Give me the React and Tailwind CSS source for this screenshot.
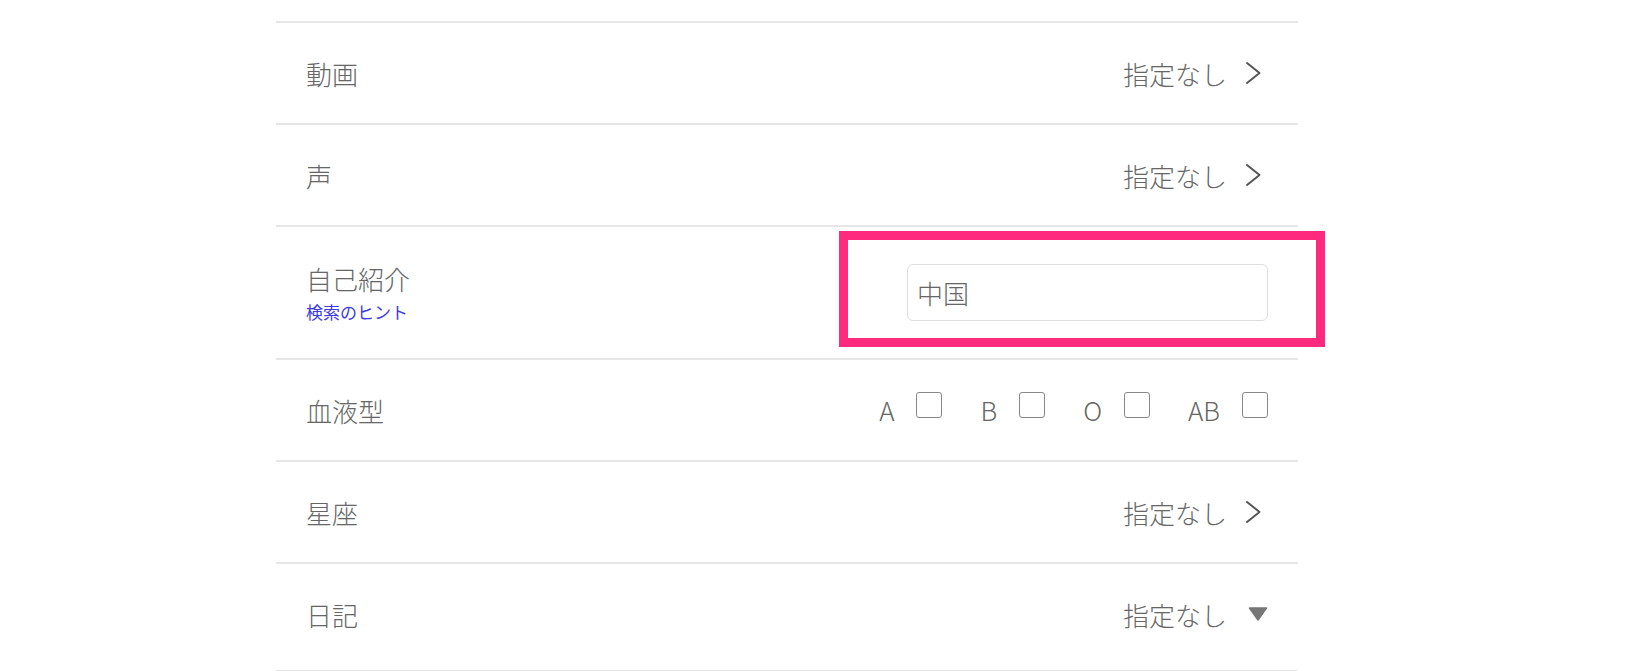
const font = { fontFamily: '"Noto Sans CJK JP", "Noto Sans", sans-serif' };

function Chevron() {
  return (
    <svg width="17" height="24" viewBox="0 0 17 24" className="shrink-0 mr-[6px]">
      <path d="M2 2 L14.5 12 L2 22" fill="none" stroke="#555" strokeWidth="2" strokeLinecap="round" strokeLinejoin="round" />
    </svg>
  );
}

function Caret() {
  return (
    <svg width="20" height="14" viewBox="0 0 20 14" className="shrink-0 ml-[3px]">
      <path d="M1.5 1 L18.5 1 L10 13 Z" fill="#777" stroke="#777" strokeWidth="1.5" strokeLinejoin="round" />
    </svg>
  );
}

function Row({ label, children, height = "h-[102px]", extra }) {
  return (
    <div className={`relative flex items-center justify-between px-[30px] border-b-2 border-[#e6e6e6] ${height}`}>
      <div className="flex flex-col">{label}</div>
      {children}
      {extra}
    </div>
  );
}

function Choice({ text, icon }) {
  return (
    <div className="flex items-center gap-[18px] text-[26px] text-[#666] font-light">
      <span>{text}</span>
      {icon === "down" ? <Caret /> : <Chevron />}
    </div>
  );
}

function Check({ label }) {
  return (
    <div className="flex items-center gap-[22px]">
      <span className="text-[26px] text-[#666] font-light leading-none">{label}</span>
      <span className="block w-[26px] h-[26px] mb-[10px] rounded-[3px] border-[1.5px] border-[#888] bg-white" />
    </div>
  );
}

function Label({ children }) {
  return <span className="text-[26px] text-[#666] font-light">{children}</span>;
}

export default function App() {
  return (
    <div className="w-full h-[671px] bg-white overflow-hidden" style={font}>
      <div className="w-[1022px] ml-[276px]">
        <div className="h-[23px] border-b-2 border-[#e6e6e6]" />
        <Row label={<Label>動画</Label>}>
          <Choice text="指定なし" />
        </Row>
        <Row label={<Label>声</Label>}>
          <Choice text="指定なし" />
        </Row>
        <Row
          height="h-[133px]"
          label={
            <>
              <span className="text-[26px] text-[#666] font-light leading-[36px]">自己紹介</span>
              <a className="text-[17px] text-[#3d3ae0] leading-[26px] mt-[2px]" href="#">検索のヒント</a>
            </>
          }
          extra={
            <div className="absolute left-[563px] top-[4px] w-[486px] h-[116px] border-[9px] border-[#fe2a7e] pointer-events-none" />
          }
        >
          <div className="w-[361px] h-[57px] rounded-[6px] border-[1.5px] border-[#dedede] flex items-center px-[9px] text-[26px] text-[#666] font-light">
            中国
          </div>
        </Row>
        <Row label={<Label>血液型</Label>}>
          <div className="flex items-center gap-[38px]">
            <Check label="A" />
            <Check label="B" />
            <Check label="O" />
            <Check label="AB" />
          </div>
        </Row>
        <Row label={<Label>星座</Label>}>
          <Choice text="指定なし" />
        </Row>
        <Row height="h-[108px] pb-[6px]" label={<Label>日記</Label>}>
          <Choice text="指定なし" icon="down" />
        </Row>
      </div>
    </div>
  );
}
